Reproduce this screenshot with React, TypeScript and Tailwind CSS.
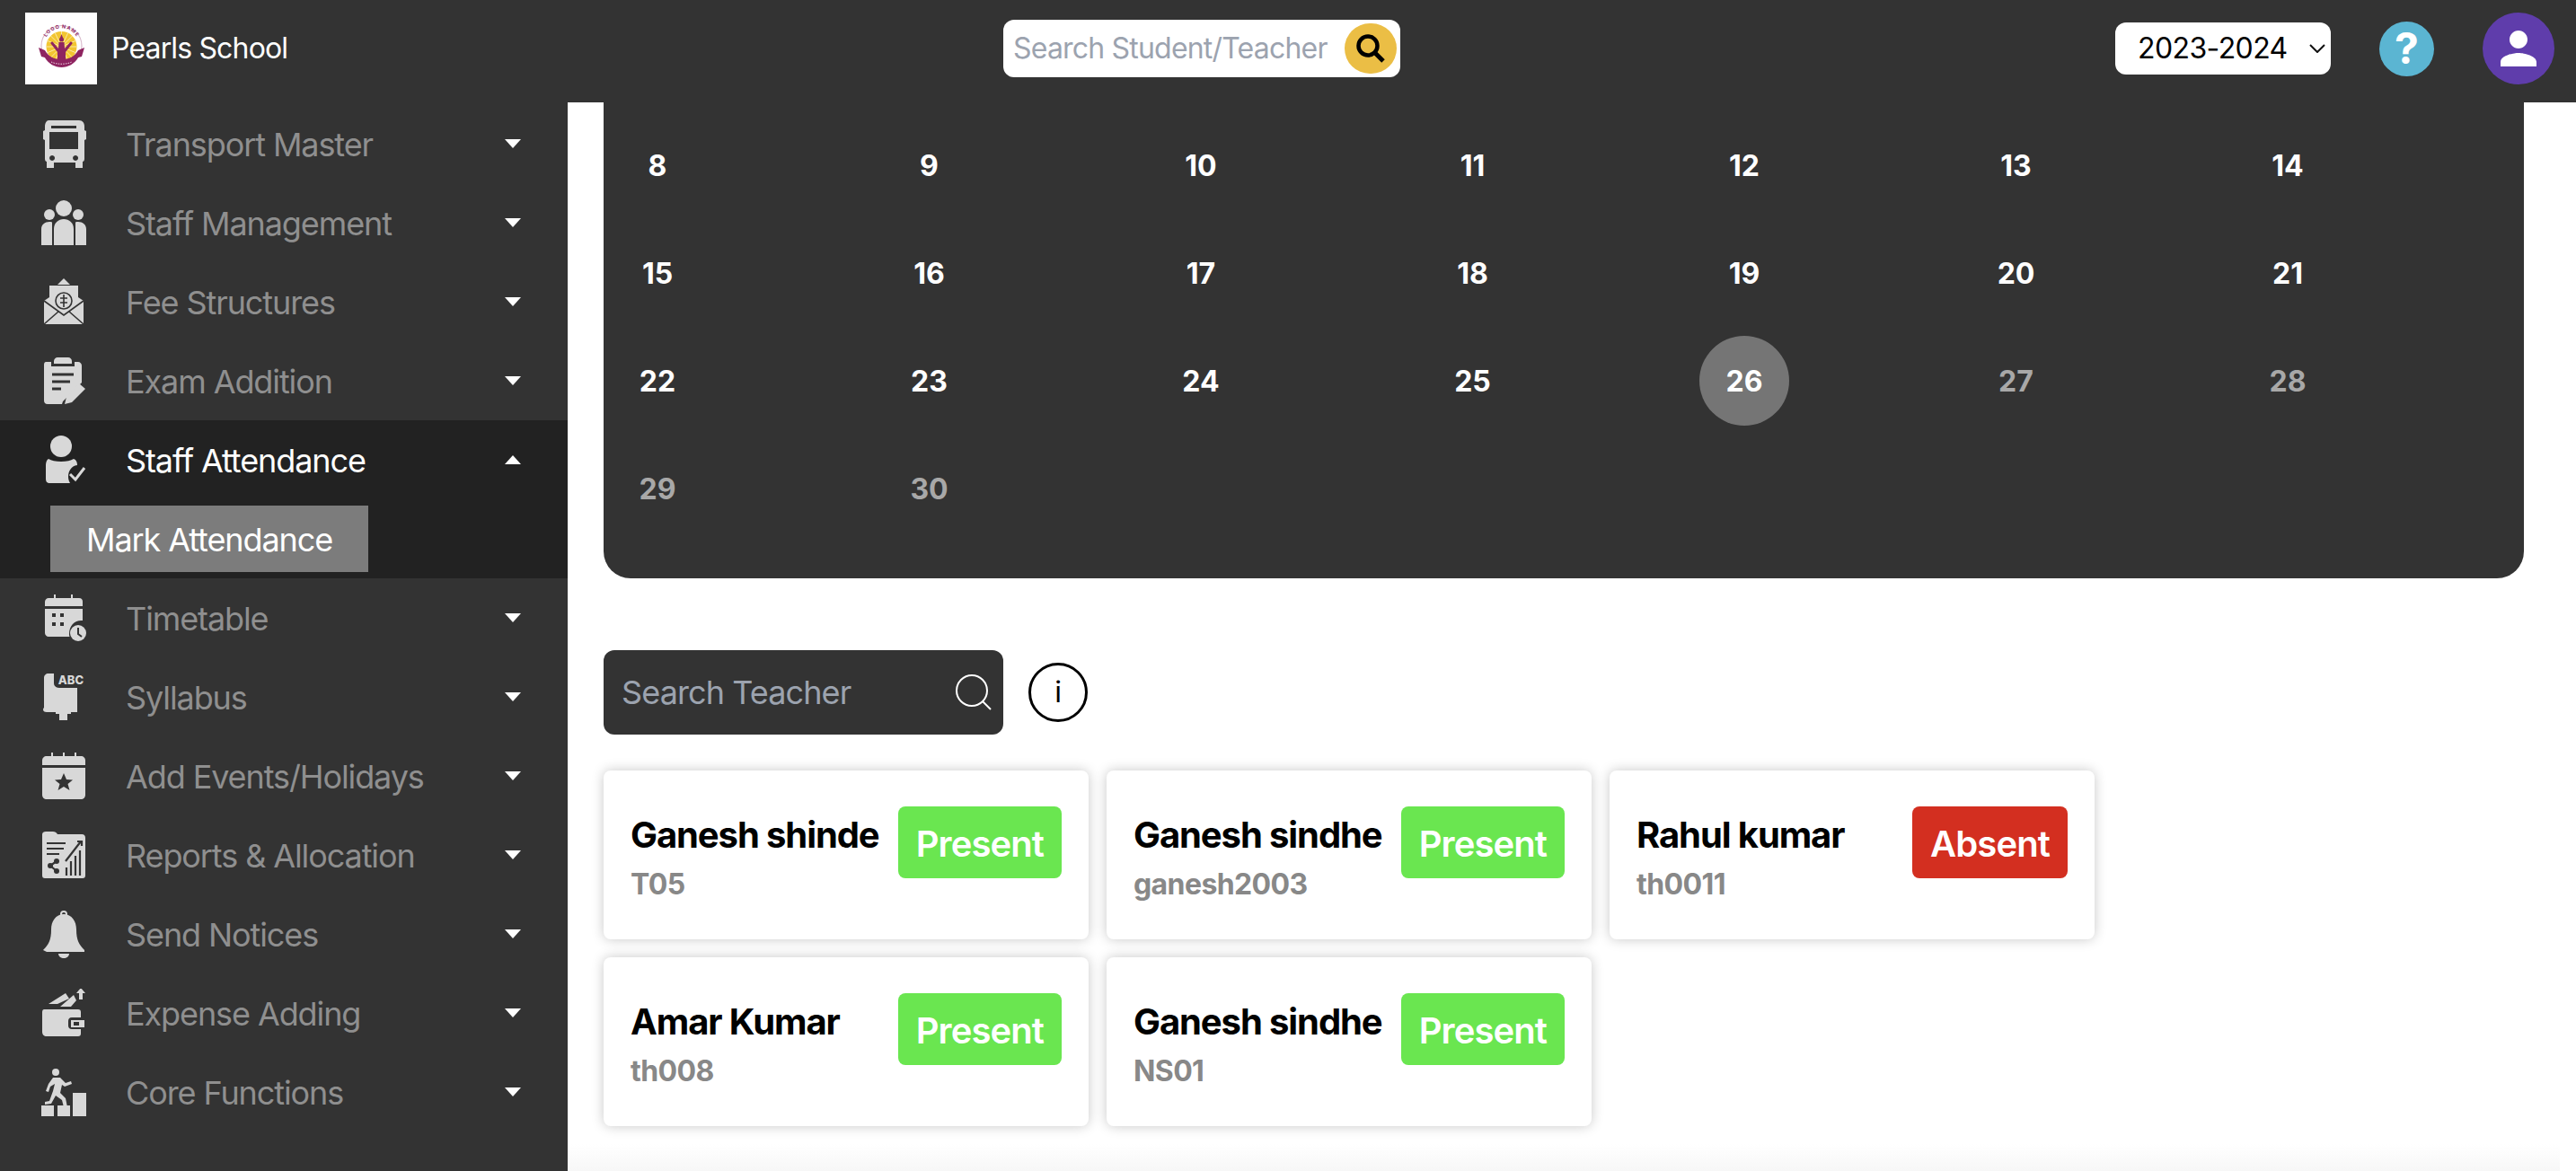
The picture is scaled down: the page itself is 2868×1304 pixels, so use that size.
import type { ReactNode } from "react";

const ICON = "#d8d8d8";
const BG = "#333333";

function Glyph({ children }: { children: ReactNode }) {
  return (
    <svg viewBox="0 0 50 54" className="w-[50px] h-[54px]" fill={ICON}>
      {children}
    </svg>
  );
}

const icons: Record<string, ReactNode> = {
  bus: (
    <Glyph>
      <path fillRule="evenodd" d="M8 1h34c4 0 6 3 6 7v4l2 1v9l-2 1v21c0 2-1 3-2 3v7h-8v-6H14v6H6v-7c-1 0-2-1-2-3V23l-2-1v-9l2-1V8c0-4 2-7 4-7zm3 6v3h28V7zM9 14v19h32V14zm3 26a3 3 0 1 0 0.1 0zm26 0a3 3 0 1 0 0.1 0z" />
    </Glyph>
  ),
  staff: (
    <Glyph>
      <circle cx="25" cy="11" r="9" />
      <circle cx="9" cy="18" r="6" />
      <circle cx="41" cy="18" r="6" />
      <path d="M14 52V34c0-7 5-11 11-11s11 4 11 11v18z" />
      <path d="M0 52V34c0-5 4-8 9-8 1 0 2 0 3 .5V52zM50 52V34c0-5-4-8-9-8-1 0-2 0-3 .5V52z" />
    </Glyph>
  ),
  fee: (
    <Glyph>
      <path d="M25 1l7 7H18z" />
      <path d="M9 9h32v13l6 4v26H3V26l6-4z" />
      <g fill="none" stroke={BG} strokeWidth="1.6">
        <path d="M3 26l22 16 22-16M3 52l16-14M47 52L31 38" />
        <circle cx="25" cy="26" r="9" />
        <path d="M25 19v14M21 23h8M21 28h8" />
      </g>
    </Glyph>
  ),
  exam: (
    <Glyph>
      <path d="M14 5c0-2 2-4 4-4h12c2 0 4 2 4 4v3H14z" />
      <path d="M5 6h6v5h26V6h4c2 0 4 2 4 4v19L24 50l-1 3H7c-3 0-4-2-4-4V9c0-2 1-3 2-3z" />
      <path d="M12 20h24M12 28h20M12 36h10" stroke={BG} strokeWidth="3" />
      <path d="M42 30l7 6-15 15-8 2 2-8z" />
    </Glyph>
  ),
  attendance: (
    <Glyph>
      <circle cx="22" cy="12" r="12" />
      <path d="M8 26c3 2 8 3 14 3s11-1 14-3c3 1 4 4 4 7-7 1-10 7-10 13 0 3 1 5 2 7H10c-4 0-5-2-5-5V33c0-3 1-6 3-7z" />
      <path d="M32 43l6 6 10-13" fill="none" stroke={ICON} strokeWidth="3" />
    </Glyph>
  ),
  timetable: (
    <Glyph>
      <path d="M14 1h2v6h-2zM33 1h2v6h-2z" />
      <path d="M8 5h34c3 0 4 2 4 4v5H4V9c0-2 2-4 4-4z" />
      <path d="M4 17h42v13c-8-1-15 5-15 15 0 1 0 2 .5 3H8c-2 0-4-2-4-4z" />
      <circle cx="41" cy="44" r="9" />
      <path d="M41 38v7l4 3" fill="none" stroke={BG} strokeWidth="2" />
      <g fill={BG}>
        <rect x="12" y="22" width="4" height="4" />
        <rect x="21" y="22" width="4" height="4" />
        <rect x="12" y="32" width="4" height="4" />
        <rect x="21" y="32" width="4" height="4" />
      </g>
    </Glyph>
  ),
  syllabus: (
    <Glyph>
      <path d="M8 1h32v43h-7v2h-4v7h-9v-7h-4v-2H6c-4 0-5-3-3-5V6c0-3 2-5 5-5z" />
      <path d="M14 0h36v12c0 3-2 5-5 5H20c-3 0-6-2-6-5z" fill={BG} />
      <text x="33" y="13" textAnchor="middle" fontSize="13" fontWeight="800" fontFamily="Inter, sans-serif" fill={ICON}>
        ABC
      </text>
    </Glyph>
  ),
  events: (
    <Glyph>
      <path d="M11 1h2v6h-2zM24 1h2v6h-2zM37 1h2v6h-2z" />
      <path d="M6 5h38c3 0 5 2 5 5v5H1v-5c0-3 2-5 5-5z" />
      <path d="M1 18h48v30c0 3-2 5-5 5H6c-3 0-5-2-5-5z" />
      <path fill={BG} d="M25 24l3 7 7 .5-5.500 4.500 2 7-6.500-4-6.500 4 2-7-5.500-4.500 7-.5z" />
    </Glyph>
  ),
  reports: (
    <Glyph>
      <path d="M1 4c0-2 2-3 4-3h8c2 0 4 1 5 3h27c3 0 4 2 4 4v42c0 2-1 3-3 3H4c-2 0-3-1-3-3z" />
      <g stroke={BG} strokeWidth="2.200" fill="none">
        <path d="M6 14h21M6 20h19M6 26h14" />
        <path d="M27 34L44 12M40 12h5v5" />
        <path d="M28 50v-9M33 50V34M38 50V28M43 50V22" />
        <path d="M10 39l7-5M10 39l7 6" />
      </g>
      <g fill={BG}>
        <circle cx="10" cy="39" r="3" />
        <circle cx="17" cy="34" r="3" />
        <circle cx="17" cy="45" r="3" />
      </g>
    </Glyph>
  ),
  bell: (
    <Glyph>
      <circle cx="25" cy="5" r="3" fill="none" stroke={ICON} strokeWidth="2" />
      <path d="M25 5c9 0 14 8 14 17 0 12 3 17 9 23v2H6l-4-2v0c6-6 9-11 9-23 0-9 5-17 14-17z" />
      <path d="M19 49h12c0 3-3 5-6 5s-6-2-6-5z" />
    </Glyph>
  ),
  expense: (
    <Glyph>
      <path d="M8 17L27 5l4 6-13 6zM21 20l15-13 3 6-6 7z" />
      <path d="M42 12V5h-3l5-6 5 6h-3v7z" />
      <path d="M3 23h38c2 0 3 1 3 3v6H34c-3 0-4 2-4 4v5c0 2 1 4 4 4h10v5c0 2-1 3-3 3H6c-3 0-5-2-5-5V26c0-2 1-3 2-3z" />
      <path d="M33 35h15v8H33z" />
      <rect x="36" y="37" width="6" height="4" fill={BG} />
    </Glyph>
  ),
  core: (
    <Glyph>
      <circle cx="16" cy="5" r="4" />
      <path d="M13 11h8l6 6 6-2 1 3-8 3-3-2-2 9 6 6 2 10h-4l-2-8-7-5-5 9-7 1v-3l5-1 4-11 2-8-5 3-2 6-3-1 3-8z" />
      <path d="M0 42h14v12H0zM18 42h14v12H18zM35 28h15v26H35z" />
    </Glyph>
  ),
};

const before = [
  { key: "bus", label: "Transport Master" },
  { key: "staff", label: "Staff Management" },
  { key: "fee", label: "Fee Structures" },
  { key: "exam", label: "Exam Addition" },
];

const after = [
  { key: "timetable", label: "Timetable" },
  { key: "syllabus", label: "Syllabus" },
  { key: "events", label: "Add Events/Holidays" },
  { key: "reports", label: "Reports & Allocation" },
  { key: "bell", label: "Send Notices" },
  { key: "expense", label: "Expense Adding" },
  { key: "core", label: "Core Functions" },
];

const teachers = [
  { name: "Ganesh shinde", code: "T05", present: true },
  { name: "Ganesh sindhe", code: "ganesh2003", present: true },
  { name: "Rahul kumar", code: "th0011", present: false },
  { name: "Amar Kumar", code: "th008", present: true },
  { name: "Ganesh sindhe", code: "NS01", present: true },
];

const days = Array.from({ length: 23 }, (_, i) => i + 8);

function Caret({ up }: { up?: boolean }) {
  return (
    <svg viewBox="0 0 18 10" className="w-[18px] h-[10px] ml-auto mr-[52px]" fill="#ffffff">
      <polygon points={up ? "9,0 18,10 0,10" : "0,0 18,0 9,10"} />
    </svg>
  );
}

function NavRow({ icon, label, active }: { icon: string; label: string; active?: boolean }) {
  return (
    <div className="h-[88px] flex items-center pl-[46px]">
      <div className="w-[50px] h-[54px] shrink-0">{icons[icon]}</div>
      <span className={`ml-[44px] pt-[2px] text-[36px] leading-[44px] tracking-[-1.1px] ${active ? "text-white" : "text-[#8f8f8f]"}`}>
        {label}
      </span>
      <Caret up={active} />
    </div>
  );
}

function Logo() {
  return (
    <div className="w-[80px] h-[80px] bg-white shrink-0">
      <svg viewBox="0 0 80 80" className="w-full h-full">
        <circle cx="40.500" cy="37" r="22.500" fill="#ffffff" stroke="#d9bccd" strokeWidth="1.200" />
        <circle cx="40.500" cy="38" r="17" fill="#f2c531" />
        <path d="M40.500 21v34M23.500 38h34M28.500 26l24 24M52.500 26l-24 24M33 22l15 32M48 22L33 54M24 31l33 14M57 31L24 45" stroke="#fbe9a6" strokeWidth="1" />
        <path id="logo-arc" fill="none" d="M21 37a19.500 19.500 0 0 1 39 0" />
        <text fontSize="5.500" fontWeight="700" letterSpacing="0.8" fill="#8e2460" fontFamily="Inter, sans-serif">
          <textPath href="#logo-arc" startOffset="50%" textAnchor="middle">
            LOGO NAME
          </textPath>
        </text>
        <g fill="#8e2460">
          <path d="M40.500 24l1.500 4h-3z" />
          <circle cx="40.500" cy="30" r="2.500" />
          <path d="M37.500 33h6l.5 7 6-7c1-1 3 0 2.500 1.500L45 44v9h-9v-9l-7.500-9.500c-.5-1.500 1.500-2.500 2.500-1.500l6 7z" />
          <path d="M15 39l7 3c4 7 10 10 18.500 10S55 49 59 42l7-3-3 10-4 1c-4 7-11 11-18.500 11S26 57 22 50l-4-1z" />
        </g>
        <path fill="none" stroke="#f0d8e6" strokeWidth="1" strokeDasharray="1.500 1.200" d="M29 55c6 3 17 3 23 0" />
      </svg>
    </div>
  );
}

function TeacherCard({ name, code, present }: { name: string; code: string; present: boolean }) {
  return (
    <div className="h-[188px] bg-white rounded-[8px] shadow-[0_0_14px_rgba(0,0,0,0.22)] flex items-start justify-between pl-[30px] pr-[30px] pt-[40px]">
      <div className="pt-[8px]">
        <div className="text-[40px] leading-[48px] font-bold tracking-[-1.1px] text-black whitespace-nowrap">{name}</div>
        <div className="mt-[11px] text-[32px] leading-[40px] font-bold tracking-[-0.6px] text-[#888888]">{code}</div>
      </div>
      <div
        className={`h-[80px] rounded-[8px] px-[20px] pt-[3px] flex items-center text-[40px] font-semibold tracking-[-0.9px] text-white ${
          present ? "bg-[#6ae650]" : "bg-[#d32f20]"
        }`}
      >
        {present ? "Present" : "Absent"}
      </div>
    </div>
  );
}

export default function App() {
  return (
    <div className="h-[1304px] overflow-hidden flex flex-col bg-white font-['Inter',sans-serif]">
      {/* Header */}
      <header className="h-[114px] shrink-0 bg-[#333333] flex items-center pl-[28px] pr-[24px] pb-[6px]">
        <Logo />
        <span className="ml-[16px] w-[993px] shrink-0 text-[32px] tracking-[-0.85px] text-white">Pearls School</span>

        <div className="w-[442px] h-[64px] bg-white rounded-[12px] flex items-center pl-[11px] pr-[4px]">
          <span className="text-[32px] tracking-[-0.8px] text-[#9ca3af] whitespace-nowrap">Search Student/Teacher</span>
          <div className="ml-auto w-[58px] h-[56px] rounded-full bg-[#ebbe45] flex items-center justify-center shrink-0">
            <svg viewBox="0 0 32 32" className="w-[32px] h-[32px]" fill="none" stroke="#000000">
              <circle cx="13" cy="13" r="10.500" strokeWidth="4.500" />
              <path d="M21 21l9 9" strokeWidth="5" />
            </svg>
          </div>
        </div>

        <div className="ml-auto w-[240px] h-[58px] bg-white rounded-[12px] flex items-center pl-[25px] pr-[6px]">
          <span className="text-[32px] tracking-[-0.6px] text-black">2023-2024</span>
          <svg viewBox="0 0 18 10" className="ml-auto w-[18px] h-[10px]" fill="none" stroke="#111111" strokeWidth="2">
            <path d="M1 1l8 8 8-8" />
          </svg>
        </div>
        <div className="ml-[54px] w-[61px] h-[61px] rounded-full bg-[#5bb5d2] flex items-center justify-center text-[48px] font-bold text-white">
          ?
        </div>
        <div className="ml-[54px] w-[80px] h-[80px] rounded-full bg-[#5f3dab] flex items-center justify-center">
          <svg viewBox="0 0 24 24" className="w-[60px] h-[60px]" fill="#ffffff">
            <path d="M12 12c2.210 0 4-1.790 4-4s-1.790-4-4-4-4 1.790-4 4 1.790 4 4 4zm0 2c-2.670 0-8 1.340-8 4v2h16v-2c0-2.660-5.330-4-8-4z" />
          </svg>
        </div>
      </header>

      <div className="flex-1 flex min-h-0">
        {/* Sidebar */}
        <aside className="w-[632px] shrink-0 bg-[#333333] pt-[2px]">
          {before.map((item) => (
            <NavRow key={item.label} icon={item.key} label={item.label} />
          ))}
          <div className="bg-[#222222] h-[176px]">
            <NavRow icon="attendance" label="Staff Attendance" active />
            <div className="ml-[56px] mt-[7px] w-[354px] h-[74px] bg-[#7c7c7c] flex items-center pl-[40px] pt-[2px] text-[36px] tracking-[-1.1px] text-white">
              Mark Attendance
            </div>
          </div>
          {after.map((item) => (
            <NavRow key={item.label} icon={item.key} label={item.label} />
          ))}
        </aside>

        {/* Main */}
        <main className="flex-1 min-w-0 flex flex-col pl-[40px] pr-[58px]">
          <section className="h-[530px] shrink-0 bg-[#333333] rounded-b-[30px] pt-[20px] pl-[10px]">
            <div className="grid grid-cols-[repeat(7,302.5px)] gap-y-[20px]">
              {days.map((day) => (
                <div
                  key={day}
                  className={`w-[100px] h-[100px] rounded-full flex items-center justify-center pt-[2px] text-[32px] font-bold ${
                    day === 26 ? "bg-[#757575] text-white" : day > 26 ? "text-[#a8a8a8]" : "text-white"
                  }`}
                >
                  {day}
                </div>
              ))}
            </div>
          </section>

          <div className="mt-[80px] flex items-center">
            <div className="w-[445px] h-[94px] rounded-[12px] bg-[#333333] flex items-center pl-[20px] pr-[13px]">
              <span className="text-[36px] tracking-[-0.9px] text-[#9ca3af]">Search Teacher</span>
              <svg viewBox="0 0 40 40" className="ml-auto w-[40px] h-[40px]" fill="none" stroke="#ffffff" strokeWidth="2">
                <circle cx="18" cy="18" r="17" />
                <path d="M30 30l9 9" />
              </svg>
            </div>
            <div className="ml-[28px] w-[66px] h-[66px] rounded-full border-[3px] border-black flex items-center justify-center text-[32px] text-black">
              i
            </div>
          </div>

          <div className="mt-[40px] grid grid-cols-[repeat(3,540px)] gap-[20px]">
            {teachers.map((t) => (
              <TeacherCard key={t.code} name={t.name} code={t.code} present={t.present} />
            ))}
          </div>

          <div className="mt-auto -mx-[40px] h-[30px] bg-gradient-to-b from-white to-[#f7f7f7]" />
        </main>
      </div>
    </div>
  );
}
